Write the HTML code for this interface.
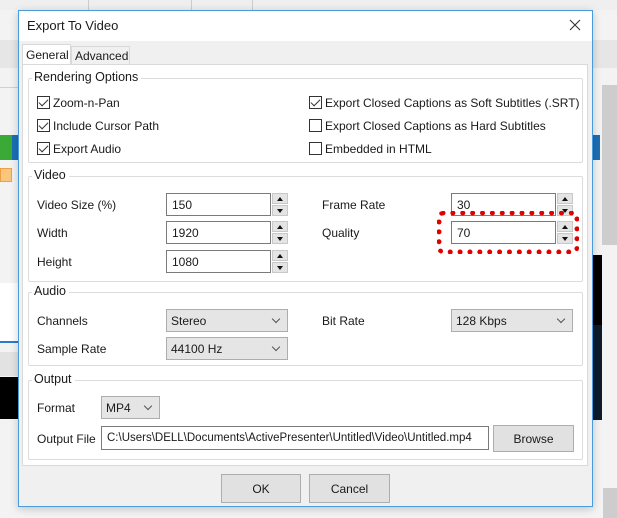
<!DOCTYPE html>
<html><head><style>
*{box-sizing:border-box;margin:0;padding:0}
body{width:617px;height:518px;position:relative;overflow:hidden;background:#f3f3f3;font-family:"Liberation Sans",sans-serif;font-size:12px;color:#1a1a1a}
.a{position:absolute}
.lbl{position:absolute;white-space:nowrap}
.grp{position:absolute;border:1px solid #dcdcdc;border-radius:2px}
.gt{position:absolute;background:#fff;padding:0 3px 0 2px;top:-9px;left:3px;white-space:nowrap;font-size:12.5px}
.cb{position:absolute;width:13px;height:13px;border:1px solid #333;background:#fff}
.cb.on::after{content:"";position:absolute;left:3px;top:0px;width:4px;height:8px;border:solid #333;border-width:0 1.3px 1.3px 0;transform:rotate(45deg)}
.inp{position:absolute;height:23px;border:1px solid #7a7a7a;background:#fff;padding:4px 0 0 5px}
.sp{position:absolute;width:16px;height:23px}
.sp div{position:absolute;left:0;width:16px;height:11px;background:#e4e4e4;border:1px solid #c8c8c8}
.sp .u{top:0}.sp .d{top:12px}
.sp div::after{content:"";position:absolute;left:4px;border-left:3.5px solid transparent;border-right:3.5px solid transparent}
.sp .u::after{top:3px;border-bottom:4px solid #111}
.sp .d::after{top:3px;border-top:4px solid #111}
.cmb{position:absolute;height:23px;background:#e5e5e5;border:1px solid #adadad;padding:4px 0 0 4px}
.cmb::after{content:"";position:absolute;right:8px;top:6px;width:5px;height:5px;border:solid #555;border-width:0 1px 1px 0;transform:rotate(45deg)}
.btn{position:absolute;background:#e1e1e1;border:1px solid #adadad;text-align:center}
</style></head><body>
<div class="a" style="left:0;top:0;width:617px;height:10px;background:#efefef"></div>
<div class="a" style="left:88px;top:0;width:1px;height:10px;background:#ccc"></div>
<div class="a" style="left:191px;top:0;width:1px;height:10px;background:#ccc"></div>
<div class="a" style="left:252px;top:0;width:1px;height:10px;background:#ccc"></div>
<div class="a" style="left:0;top:40px;width:617px;height:28px;background:#e6e6e6"></div>
<div class="a" style="left:0;top:87px;width:18px;height:1px;background:#d0d0d0"></div>
<div class="a" style="left:0;top:135px;width:12px;height:25px;background:#3aa935"></div>
<div class="a" style="left:12px;top:135px;width:6px;height:25px;background:#1e6eb5"></div>
<div class="a" style="left:0;top:168px;width:12px;height:14px;background:#f9c680;border:1px solid #f0a040"></div>
<div class="a" style="left:0;top:283px;width:18px;height:60px;background:#fff;border-bottom:2px solid #2a7ad0"></div>
<div class="a" style="left:0;top:352px;width:18px;height:24px;background:#e2e2e2"></div>
<div class="a" style="left:0;top:377px;width:18px;height:42px;background:#000"></div>
<div class="a" style="left:592px;top:135px;width:8px;height:25px;background:#1e6eb5"></div>
<div class="a" style="left:602px;top:85px;width:15px;height:160px;background:#cdcdcd"></div>
<div class="a" style="left:592px;top:255px;width:10px;height:165px;background:#000"></div>
<div class="a" style="left:592px;top:325px;width:10px;height:95px;background:#0c1c2c"></div>
<div class="a" style="left:603px;top:488px;width:14px;height:30px;background:#cdcdcd"></div>
<div class="a" style="left:18px;top:10px;width:575px;height:497px;background:#f0f0f0;border:1px solid #4a9ae0;box-shadow:0 2px 8px rgba(0,0,0,.2)"></div>
<div class="a" style="left:19px;top:11px;width:573px;height:30px;background:#fff"></div>
<div class="lbl" style="left:27px;top:18px;font-size:13px">Export To Video</div>
<svg class="a" style="left:569px;top:19px" width="12" height="12"><path d="M1 1L11 11M11 1L1 11" stroke="#333" stroke-width="1.1"/></svg>
<div class="a" style="left:22px;top:44px;width:49px;height:21px;background:#fff;border:1px solid #d9d9d9;border-bottom:none"></div>
<div class="lbl" style="left:26px;top:48px">General</div>
<div class="a" style="left:71px;top:46px;width:59px;height:18px;background:#f0f0f0;border:1px solid #d9d9d9;border-bottom:none"></div>
<div class="lbl" style="left:75px;top:49px">Advanced</div>
<div class="a" style="left:22px;top:64px;width:566px;height:402px;background:#fff;border:1px solid #d9d9d9"></div>
<div class="grp" style="left:28px;top:78px;width:555px;height:85px"><span class="gt">Rendering Options</span></div>
<div class="cb on" style="left:37px;top:96px"></div><div class="lbl" style="left:53px;top:96px">Zoom-n-Pan</div>
<div class="cb on" style="left:37px;top:119px"></div><div class="lbl" style="left:53px;top:119px">Include Cursor Path</div>
<div class="cb on" style="left:37px;top:142px"></div><div class="lbl" style="left:53px;top:142px">Export Audio</div>
<div class="cb on" style="left:309px;top:96px"></div><div class="lbl" style="left:325px;top:96px">Export Closed Captions as Soft Subtitles (.SRT)</div>
<div class="cb" style="left:309px;top:119px"></div><div class="lbl" style="left:325px;top:119px">Export Closed Captions as Hard Subtitles</div>
<div class="cb" style="left:309px;top:142px"></div><div class="lbl" style="left:325px;top:142px">Embedded in HTML</div>
<div class="grp" style="left:28px;top:176px;width:555px;height:106px"><span class="gt">Video</span></div>
<div class="lbl" style="left:37px;top:198px">Video Size (%)</div>
<div class="lbl" style="left:37px;top:226px">Width</div>
<div class="lbl" style="left:37px;top:255px">Height</div>
<div class="inp" style="left:166px;top:193px;width:105px">150</div><div class="sp" style="left:272px;top:193px"><div class="u"></div><div class="d"></div></div>
<div class="inp" style="left:166px;top:221px;width:105px">1920</div><div class="sp" style="left:272px;top:221px"><div class="u"></div><div class="d"></div></div>
<div class="inp" style="left:166px;top:250px;width:105px">1080</div><div class="sp" style="left:272px;top:250px"><div class="u"></div><div class="d"></div></div>
<div class="lbl" style="left:322px;top:198px">Frame Rate</div>
<div class="lbl" style="left:322px;top:226px">Quality</div>
<div class="inp" style="left:451px;top:193px;width:105px">30</div><div class="sp" style="left:557px;top:193px"><div class="u"></div><div class="d"></div></div>
<div class="inp" style="left:451px;top:221px;width:105px">70</div><div class="sp" style="left:557px;top:221px"><div class="u"></div><div class="d"></div></div>
<div class="a" style="left:437px;top:211px;width:142px;height:43px;border:5px dotted #e00000;border-radius:6px"></div>
<div class="grp" style="left:28px;top:292px;width:555px;height:74px"><span class="gt">Audio</span></div>
<div class="lbl" style="left:37px;top:314px">Channels</div>
<div class="lbl" style="left:37px;top:342px">Sample Rate</div>
<div class="cmb" style="left:166px;top:309px;width:122px">Stereo</div>
<div class="cmb" style="left:166px;top:337px;width:122px">44100 Hz</div>
<div class="lbl" style="left:322px;top:314px">Bit Rate</div>
<div class="cmb" style="left:451px;top:309px;width:122px">128 Kbps</div>
<div class="grp" style="left:28px;top:380px;width:555px;height:80px"><span class="gt">Output</span></div>
<div class="lbl" style="left:37px;top:401px">Format</div>
<div class="cmb" style="left:101px;top:396px;width:59px">MP4</div>
<div class="lbl" style="left:37px;top:432px">Output File</div>
<div class="inp" style="left:101px;top:426px;width:388px;height:24px;font-size:11.5px;padding-top:5px;padding-left:5px;white-space:nowrap;overflow:hidden">C:\Users\DELL\Documents\ActivePresenter\Untitled\Video\Untitled.mp4</div>
<div class="btn" style="left:493px;top:425px;width:81px;height:27px;padding-top:6px">Browse</div>
<div class="btn" style="left:221px;top:474px;width:80px;height:29px;padding-top:7px">OK</div>
<div class="btn" style="left:309px;top:474px;width:81px;height:29px;padding-top:7px">Cancel</div>
</body></html>
